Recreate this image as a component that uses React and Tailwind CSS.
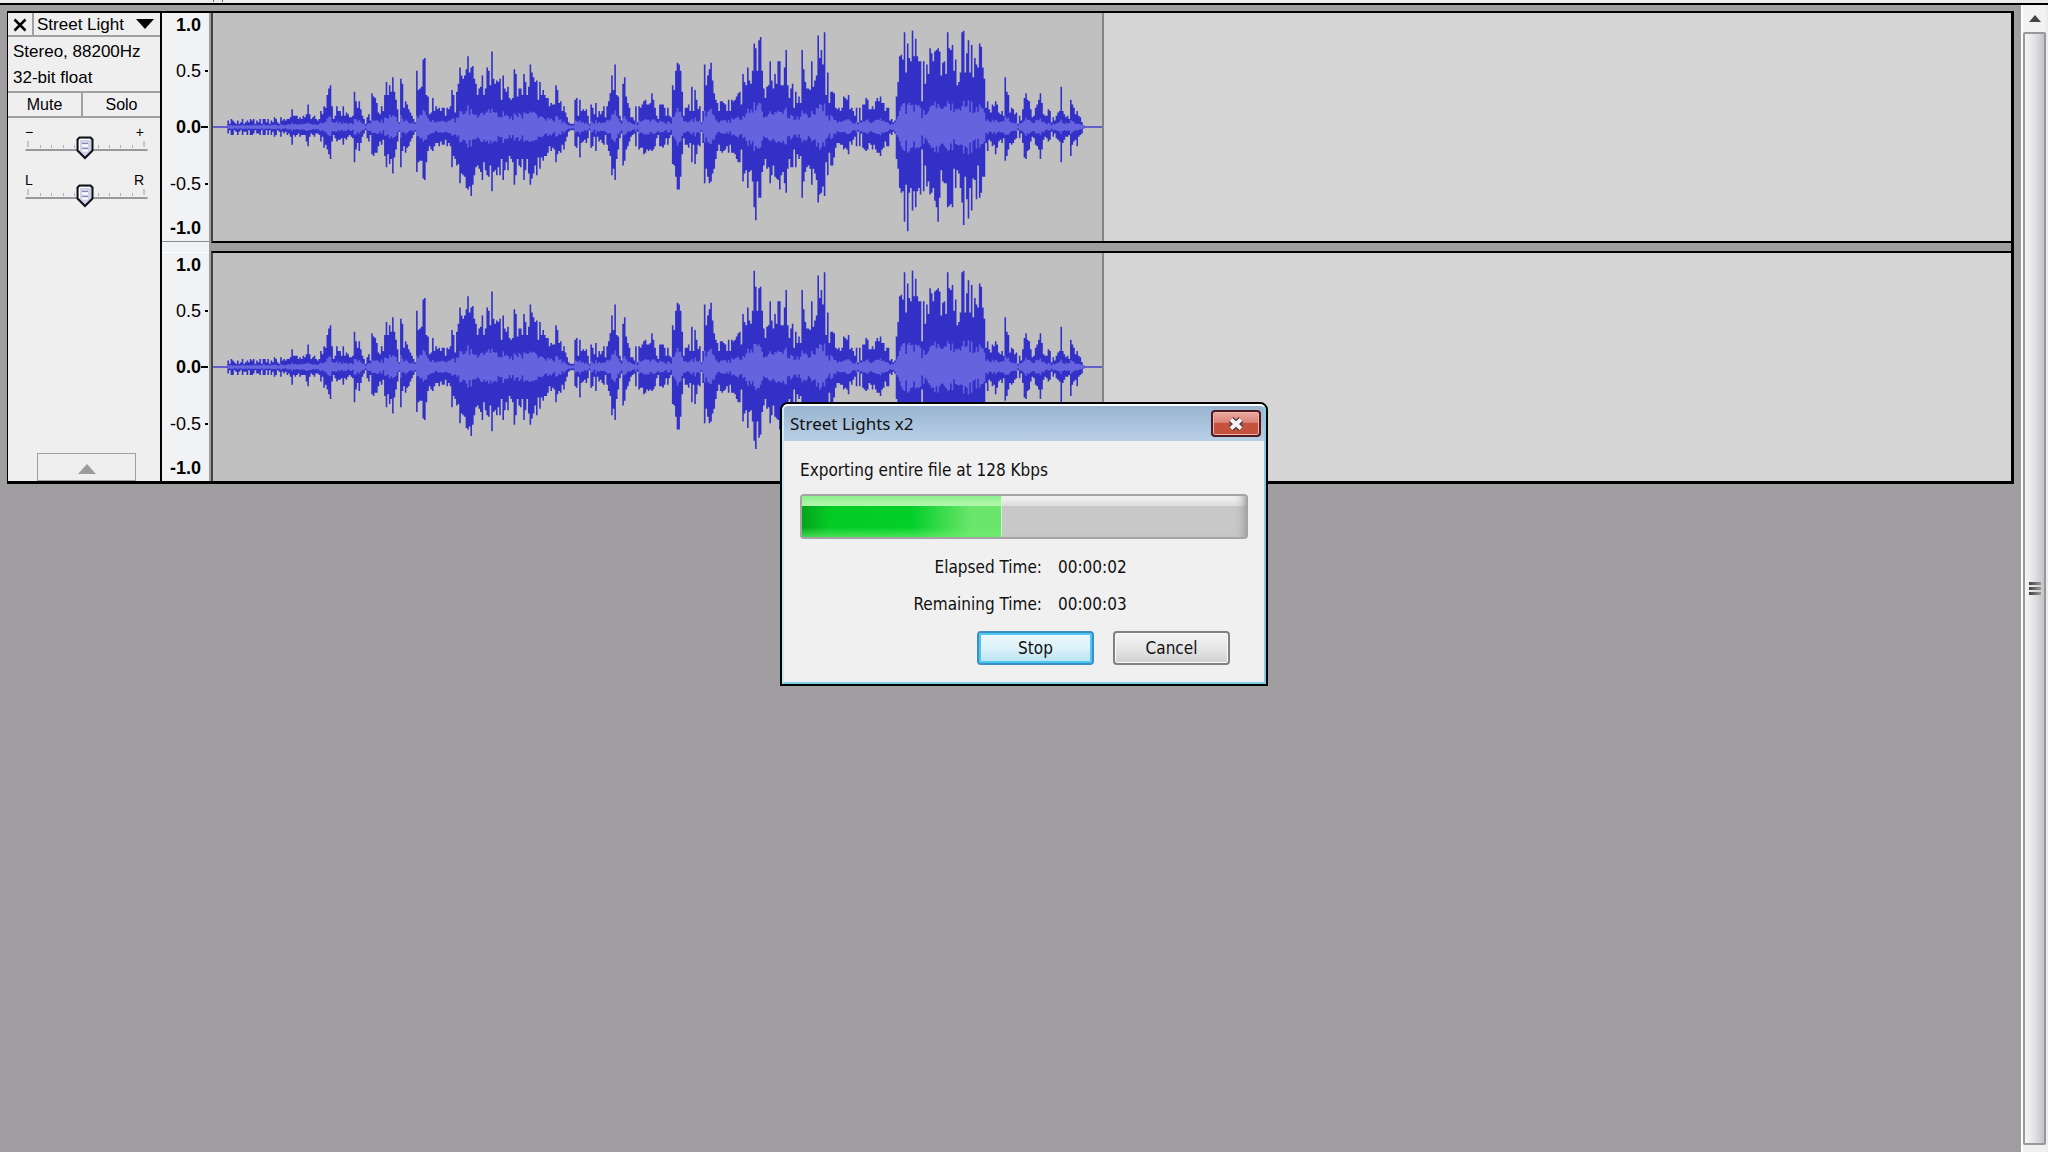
import { useState } from "react";

/* ---------- WAVEFORM DATA ---------- */
// one value per column, measured from the centre line
const SEGMENTS = [
  {
    start: 9,
    up: [4, 2, 5, 4, 3, 2, 4, 2, 3, 5, 2, 3, 4, 3, 5, 4, 5, 2, 4, 3, 5, 2, 5, 5, 3, 5, 2, 4, 3, 6, 5, 3, 2],
    down: [4, 2, 5, 5, 2, 3, 5, 3, 2, 5, 3, 3, 5, 2, 5, 5, 4, 2, 4, 4, 5, 2, 5, 5, 2, 5, 2, 5, 3, 6, 5, 2, 3],
  },
  {
    start: 42,
    up: [6, 4, 5, 4, 5, 5, 6, 11, 7, 7, 7, 5, 6, 5, 7, 6, 8, 14, 8, 5, 6, 7, 5, 4],
    down: [6, 3, 4, 3, 5, 4, 6, 11, 5, 6, 5, 4, 6, 5, 5, 5, 9, 12, 6, 4, 5, 6, 4, 4],
  },
  {
    start: 66,
    up: [5, 10, 8, 13, 12, 20, 24, 26, 13, 5, 7, 13, 10, 10, 7, 13, 7, 9, 8, 6, 6, 7],
    down: [5, 9, 6, 13, 11, 14, 17, 20, 9, 5, 7, 9, 8, 8, 7, 11, 7, 8, 6, 5, 6, 7],
  },
  {
    start: 88,
    up: [22, 16, 12, 16, 11, 7, 5, 2, 6, 8, 4, 21, 19, 18, 15, 9, 8, 13, 10, 20, 28, 20, 26, 22, 31, 22, 17, 11, 3, 30, 27, 12, 16, 14, 11, 9, 7, 5, 3],
    down: [22, 14, 10, 15, 10, 6, 4, 2, 7, 9, 5, 17, 18, 16, 16, 12, 9, 11, 8, 18, 25, 17, 23, 20, 29, 19, 14, 9, 3, 25, 15, 12, 16, 13, 12, 9, 7, 5, 3],
  },
  {
    start: 127,
    up: [35, 23, 24, 25, 42, 43, 20, 19, 8, 9, 18, 10, 13, 11, 12, 10, 12, 12, 7, 12, 11, 13, 23, 20, 9, 22, 27, 37, 32, 30, 32, 36, 44, 34, 37, 38, 30, 27, 20, 24, 25, 32, 20, 24, 37, 35, 26, 47, 30, 27, 29, 28, 30, 17, 32, 24, 22, 25, 18, 17, 18, 36, 33, 19, 24],
    down: [28, 22, 21, 21, 32, 33, 22, 15, 12, 14, 15, 12, 10, 10, 12, 9, 11, 11, 8, 12, 10, 12, 25, 18, 20, 24, 23, 35, 29, 30, 31, 38, 39, 37, 43, 36, 30, 25, 24, 26, 28, 33, 22, 27, 30, 31, 24, 40, 28, 27, 30, 25, 30, 20, 33, 27, 22, 27, 18, 20, 22, 36, 30, 20, 24],
  },
  {
    start: 192,
    up: [24, 20, 33, 28, 20, 25, 39, 34, 31, 28, 29, 17, 28, 20, 23, 20, 18, 18, 13, 15, 14, 14, 26, 23, 15, 16, 10, 13, 9, 6, 3, 2, 2, 2, 17, 18, 7, 17, 10, 11, 10, 11, 7, 2, 14, 12, 8, 15, 6, 10],
    down: [25, 20, 33, 27, 20, 29, 36, 32, 29, 24, 30, 19, 26, 19, 21, 18, 18, 16, 12, 15, 13, 14, 22, 17, 15, 16, 11, 14, 9, 6, 3, 2, 2, 2, 12, 13, 6, 19, 10, 9, 8, 10, 7, 2, 13, 12, 6, 15, 6, 9],
  },
  {
    start: 242,
    up: [8, 10, 13, 6, 13, 16, 21, 32, 23, 39, 20, 19, 7, 4, 27, 31, 19, 15, 12, 6, 6, 4, 13, 3, 13, 12, 14, 16, 17, 14, 14, 15, 21, 17, 12, 7, 5, 14, 14, 14, 12, 7, 12, 7, 6],
    down: [8, 10, 11, 5, 11, 15, 18, 30, 26, 33, 20, 14, 7, 4, 24, 21, 14, 12, 9, 6, 5, 4, 12, 3, 14, 13, 13, 17, 16, 14, 15, 14, 15, 14, 12, 7, 5, 12, 12, 13, 11, 7, 11, 7, 5],
  },
  {
    start: 287,
    up: [26, 23, 35, 40, 39, 35, 22, 7, 12, 12, 14, 10, 25, 10, 23, 17, 11, 13, 3, 10, 39, 26, 32, 36, 40, 29, 21, 17, 15, 10, 16, 16, 15, 14, 10, 17, 10, 17, 16, 17, 19, 21, 22, 14, 33, 28, 26, 37, 29, 27, 35, 52, 49, 35, 54, 56, 35, 24, 18, 25, 26, 41, 29, 24, 33, 27, 41, 41, 26, 26, 37, 48, 26],
    down: [23, 24, 31, 39, 39, 31, 17, 7, 11, 11, 13, 10, 22, 11, 23, 17, 11, 12, 3, 10, 35, 26, 31, 35, 34, 29, 26, 20, 15, 11, 15, 16, 15, 14, 12, 16, 11, 16, 16, 17, 20, 22, 22, 14, 34, 29, 27, 38, 28, 27, 34, 50, 58, 34, 44, 44, 28, 24, 20, 26, 25, 35, 30, 24, 31, 32, 33, 39, 30, 28, 35, 41, 26],
  },
  {
    start: 360,
    up: [18, 24, 27, 12, 22, 15, 19, 15, 48, 36, 28, 24, 24, 23, 41, 25, 29, 32, 57, 43, 48, 39, 59, 20, 34, 15, 22, 22, 21, 12, 11, 12, 10],
    down: [20, 25, 25, 14, 25, 17, 20, 18, 44, 34, 28, 25, 24, 26, 36, 26, 29, 33, 47, 42, 41, 37, 43, 22, 30, 16, 24, 24, 19, 13, 10, 10, 11],
  },
  {
    start: 393,
    up: [12, 19, 18, 17, 20, 11, 12, 10, 7, 12, 3, 12, 4, 14, 14, 18, 17, 11, 11, 13, 11, 16, 18, 16, 19, 15, 15, 10, 12, 12, 4, 5, 3, 4, 19, 28, 44, 45, 42, 59, 34, 52, 43, 41, 60, 44, 55, 44, 41, 41, 16, 41, 27, 39, 33, 49, 46, 41, 47, 48, 49, 47, 32, 40, 41, 33, 59, 49, 48, 51, 35, 42, 26, 28, 34, 59, 60, 34, 46, 54, 34, 51, 31, 43, 39, 37, 52, 50, 37, 30, 12, 16],
    down: [11, 14, 13, 14, 17, 9, 11, 8, 6, 12, 3, 12, 4, 13, 14, 15, 14, 10, 11, 14, 11, 14, 16, 16, 18, 14, 13, 9, 12, 12, 4, 5, 3, 4, 20, 26, 38, 41, 40, 59, 36, 65, 41, 38, 52, 40, 50, 40, 38, 42, 14, 40, 24, 37, 34, 42, 41, 38, 46, 50, 59, 44, 27, 34, 35, 35, 50, 49, 48, 50, 26, 38, 27, 29, 38, 47, 61, 31, 45, 57, 38, 52, 32, 33, 45, 24, 44, 41, 31, 31, 10, 15],
  },
  {
    start: 485,
    up: [11, 9, 14, 13, 16, 14, 9, 8, 10, 7, 31, 22, 20, 9, 12, 11, 8, 9, 2, 7, 4, 11, 18, 21, 17, 16, 11, 6, 7, 12, 14, 17, 21, 15, 8, 7, 7, 11, 10, 3, 6, 4, 7, 9, 10, 25, 10, 8, 6, 7, 5, 17, 14, 12, 8, 10, 7, 6, 3, 1],
    down: [8, 9, 12, 11, 17, 13, 9, 8, 10, 7, 21, 18, 14, 10, 11, 10, 8, 7, 2, 7, 4, 10, 19, 20, 15, 14, 9, 6, 7, 11, 12, 14, 20, 14, 8, 6, 7, 9, 8, 3, 6, 4, 7, 8, 9, 22, 10, 8, 6, 6, 5, 18, 11, 9, 8, 12, 6, 5, 4, 1],
  },
];

const LEFT = SEGMENTS.flatMap((s) =>
  s.up.map((up, i) => ({ x: s.start + i, up, down: s.down[i] ?? up }))
);

// the right channel differs from the left in a few peaks only
const RIGHT_PEAKS = {
  338: { up: 60, down: 46 },
  339: { up: 50, down: 51 },
  341: { up: 49, down: 44 },
  342: { up: 50, down: 42 },
};
const RIGHT = LEFT.map((c) => ({ ...c, ...RIGHT_PEAKS[c.x] }));

const MIDDLE = 71;

// the lighter inner band: local average of the peaks plus part of each peak
function toBand(columns) {
  return columns.map((c, i) => {
    const near = columns.slice(Math.max(0, i - 3), i + 4);
    const avg = near.reduce((sum, n) => sum + n.up + n.down, 0) / near.length / 2;
    const ripple = [0, 1, -1, 2, 0, -2, 1][(i * 5 + c.up) % 7] * avg * 0.03;
    const level = avg * 0.12 + ripple;
    return {
      x: c.x,
      up: Math.max(1, Math.min(level + c.up * 0.16, c.up - 1)),
      down: Math.max(1, Math.min(level + c.down * 0.16, c.down - 1)),
    };
  });
}

function toPath(columns) {
  return columns
    .map((c) => `M${c.x} ${MIDDLE - c.up}h1v${c.up + c.down}h-1z`)
    .join("");
}

const CHANNELS = [
  { label: "Left channel", peaks: toPath(LEFT), band: toPath(toBand(LEFT)) },
  { label: "Right channel", peaks: toPath(RIGHT), band: toPath(toBand(RIGHT)) },
];

/* ---------- WAVEFORM ---------- */
function Channel({ channel }) {
  return (
    <div className="flex h-[228px] bg-[#d6d5d6]">
      <div className="w-[891px] border-r-2 border-[#858585] bg-[#c0c0c0]">
        <svg
          role="img"
          aria-label={channel.label}
          viewBox="0 0 556 142"
          preserveAspectRatio="none"
          className="block h-full w-full"
        >
          <path d={`M0 ${MIDDLE}h556`} stroke="#4340c8" strokeWidth="1" />
          <path d={channel.peaks} fill="#3330c8" />
          <path d={channel.band} fill="#6563de" />
        </svg>
      </div>
    </div>
  );
}

/* ---------- VERTICAL RULER ---------- */
function Ruler() {
  return (
    <div className="grid h-[228px] grid-rows-[24px_68px_44px_70px_18px] items-center text-right text-lg leading-5">
      <div className="pr-2 font-bold">1.0</div>
      <div className="flex items-center justify-end gap-1 pr-px">
        0.5
        <span className="h-[2px] w-[3px] bg-black" />
      </div>
      <div className="flex items-center justify-end pr-px font-bold">
        0.0
        <span className="h-[2px] w-[7px] bg-black" />
      </div>
      <div className="flex items-center justify-end gap-1 pr-px">
        -0.5
        <span className="h-[2px] w-[3px] bg-black" />
      </div>
      <div className="pr-2 font-bold">-1.0</div>
    </div>
  );
}

/* ---------- TRACK SLIDER ---------- */
function TrackSlider({ label, low, high }) {
  const [value, setValue] = useState(49);

  return (
    <div>
      <div className="flex h-[10px] justify-between pr-1 text-sm leading-3">
        <span>{low}</span>
        <span>{high}</span>
      </div>
      <div className="relative h-6">
        <svg viewBox="0 0 122 24" className="block h-6 w-full">
          <path
            d="M15 9v3M26 9v3M38 9v3M49 9v3M73 9v3M84 9v3M95 9v3M107 9v3"
            stroke="#b0b0b0"
            strokeWidth="1"
          />
          <path d="M2.500 5v6M118.500 5v6" stroke="#9a9a9a" />
          <path d="M0 14h122" stroke="#9a9a9a" strokeWidth="2" />
        </svg>
        <svg
          viewBox="0 0 18 24"
          className="absolute top-0 h-6 w-[18px] -translate-x-1/2"
          style={{ left: `${value}%` }}
        >
          <path
            d="M3.500 1.500h11l2 2v11l-7.500 7.500l-7.500-7.500v-11z"
            fill="#d0d0e6"
            stroke="#101018"
            strokeWidth="2"
          />
          <path d="M3.500 14V3.500h10" fill="none" stroke="#fff" />
          <path d="M6 9.500h6M6 14.500h6" stroke="#fff" strokeWidth="2" />
          <path d="M6 7.500h6M6 12.500h6" stroke="#8484a8" />
        </svg>
        <input
          type="range"
          min="0"
          max="100"
          aria-label={label}
          value={value}
          onChange={(e) => setValue(Number(e.target.value))}
          className="absolute inset-0 w-full opacity-0"
        />
      </div>
    </div>
  );
}

/* ---------- TRACK PANEL ---------- */
function TrackPanel() {
  return (
    <div className="flex w-[152px] shrink-0 flex-col bg-[#f0eff0] text-[17px]">
      <div className="flex h-6 border-b-2 border-[#a0a0a0]">
        <button
          aria-label="Close track"
          className="flex w-[26px] items-center justify-center border-r-2 border-[#a0a0a0] pt-[2px]"
        >
          <svg viewBox="0 0 14 14" className="h-[14px] w-[14px]">
            <path d="M1.500 1.500l11 11M12.500 1.500l-11 11" stroke="#000" strokeWidth="2.500" />
          </svg>
        </button>
        <button className="flex flex-1 items-center justify-between pt-[2px] pr-[6px] pl-[3px] leading-5">
          Street Light
          <svg viewBox="0 0 18 10" className="mb-[2px] h-[10px] w-[18px]">
            <path d="M0 0h18l-9 10z" />
          </svg>
        </button>
      </div>

      <div className="h-[54px] px-[5px] pt-[2px] leading-[26px]">
        <div>Stereo, 88200Hz</div>
        <div>32-bit float</div>
      </div>

      <div className="flex h-[27px] border-y-2 border-[#a0a0a0] text-base leading-5">
        <button className="w-[75px] border-r-2 border-[#a0a0a0]">Mute</button>
        <button className="flex-1">Solo</button>
      </div>

      <div className="space-y-[14px] pt-2 pr-3 pl-[17px]">
        <TrackSlider label="Gain" low="−" high="+" />
        <TrackSlider label="Pan" low="L" high="R" />
      </div>

      <button
        aria-label="Collapse track"
        className="mt-auto ml-[29px] flex h-7 w-[99px] items-center justify-center border border-[#a0a0a0] pt-1"
      >
        <svg viewBox="0 0 18 10" className="h-[10px] w-[18px]">
          <path d="M9 0l9 10H0z" fill="#9c9c9c" />
        </svg>
      </button>
    </div>
  );
}

/* ---------- SCROLL BAR ---------- */
function ScrollBar() {
  return (
    <div className="flex w-[27px] shrink-0 flex-col border-l-2 border-white bg-[#ececee] pr-[2px]">
      <button aria-label="Scroll up" className="flex h-[27px] items-center justify-center bg-[#f2f2f2]">
        <svg viewBox="0 0 12 7" className="h-[7px] w-3">
          <path d="M6 0l6 7H0z" fill="#444" />
        </svg>
      </button>
      <div className="flex flex-1 flex-col items-center justify-center gap-[2px] rounded-xs border-2 border-[#98989a] bg-linear-to-r from-[#f6f6f6] via-[#e2e2e4] to-[#c4c4c8]">
        <span className="h-[3px] w-3 bg-linear-to-r from-[#444] to-[#999]" />
        <span className="h-[3px] w-3 bg-linear-to-r from-[#444] to-[#999]" />
        <span className="h-[3px] w-3 bg-linear-to-r from-[#444] to-[#999]" />
      </div>
      <div className="h-[7px] bg-[#f0f0f0]" />
    </div>
  );
}

/* ---------- EXPORT DIALOG ---------- */
function ExportDialog() {
  const progress = 45;

  return (
    <div
      role="dialog"
      aria-labelledby="dialog-title"
      className="absolute top-[402px] left-1/2 w-[488px] -translate-x-1/2 rounded-t-lg border-2 border-black bg-[#f0f0f0] font-['DejaVu_Sans_Condensed','DejaVu_Sans',sans-serif] text-[17px] leading-6 text-[#101010]"
    >
      <div className="rounded-t-md border-2 border-[#7fd0e4] border-t-white border-l-[#c4ecf6]">
        <div className="flex h-[35px] items-center justify-between rounded-t-sm bg-linear-to-b from-[#9ab4d0] to-[#b8cfe6] pr-[3px] pl-[6px]">
          <h1 id="dialog-title" className="font-['Noto_Sans','Open_Sans',sans-serif]">
            Street Lights x2
          </h1>
          <button
            aria-label="Close"
            className="flex h-[27px] w-[50px] items-center justify-center rounded-sm border-2 border-[#4e1a20] bg-linear-to-b from-[#eaaaa2] from-0% via-[#dc8478] via-45% to-[#c4523c] to-50% shadow-[inset_0_0_0_1px_#f0b8b0]"
          >
            <svg viewBox="0 0 20 16" className="h-4 w-5">
              <path d="M5 3.500l10 9M15 3.500l-10 9" stroke="#50383c" strokeWidth="6.500" />
              <path d="M5 3.500l10 9M15 3.500l-10 9" stroke="#f4f4f4" strokeWidth="4" />
            </svg>
          </button>
        </div>

        <div className="px-4 pt-[17px] pb-[17px]">
          <p>Exporting entire file at 128 Kbps</p>

          <div
            role="progressbar"
            aria-label="Export progress"
            aria-valuenow={progress}
            className="mt-3 h-[45px] rounded-sm border-2 border-[#a4a4a4] bg-linear-to-b from-[#f6f6f6] from-0% via-[#dcdcdc] via-24% to-[#c9c8c9] to-25% shadow-[inset_-8px_0_8px_-6px_#999]"
          >
            <div
              className="h-full border-r border-[#c8ffc4] bg-[linear-gradient(90deg,#04a41c_0%,#02cb26_14%,#02d028_55%,#6ae66c_85%,#6ae66c_100%)]"
              style={{ width: `${progress}%` }}
            >
              <div className="flex h-full flex-col justify-between">
                <div className="h-[10px] bg-linear-to-b from-[#8ef08e] to-[#b4f6ae]" />
                <div className="h-[10px] bg-linear-to-b from-transparent to-[#70f070]/60" />
              </div>
            </div>
          </div>

          <dl className="mt-4 grid grid-cols-[242px_1fr] gap-x-4 gap-y-[13px]">
            <dt className="text-right">Elapsed Time:</dt>
            <dd>00:00:02</dd>
            <dt className="text-right">Remaining Time:</dt>
            <dd>00:00:03</dd>
          </dl>

          <div className="mt-[15px] flex justify-end gap-[19px] pr-[18px]">
            <button className="h-[34px] w-[117px] rounded-sm border-2 border-[#3c8fc1] bg-linear-to-b from-[#eef9fd] from-0% via-[#dcf2fa] via-50% to-[#b8e2f2] to-100% shadow-[inset_0_0_0_2px_#4cc8f4]">
              Stop
            </button>
            <button className="h-[34px] w-[117px] rounded-sm border-2 border-[#808080] bg-linear-to-b from-[#f4f4f4] from-0% via-[#e6e6e6] via-50% to-[#d0d0d0] to-100% shadow-[inset_0_0_0_1px_#fafafa]">
              Cancel
            </button>
          </div>
        </div>
      </div>
    </div>
  );
}

export default function App() {
  return (
    <div className="relative flex h-screen flex-col overflow-hidden bg-[#a09ea0] font-['Liberation_Sans',Arial,sans-serif] text-black">
      <div className="flex h-[5px] shrink-0 gap-2 border-b-2 border-black bg-[#ececec] pl-[213px]">
        <span className="h-[2px] w-px bg-[#666]" />
        <span className="h-[2px] w-px bg-[#666]" />
      </div>

      <div className="flex min-h-0 flex-1">
        <main className="min-w-0 flex-1 px-[7px] pt-[6px]">
          <section
            aria-label="Street Lights track"
            className="flex border-t-2 border-r-[3px] border-b-[3px] border-l border-black"
          >
            <TrackPanel />

            {/* RULERS */}
            <div className="flex w-[49px] shrink-0 flex-col justify-between border-l-2 border-black bg-[#f0f2f4]">
              <Ruler />
              <div className="flex-1 border-t border-b border-t-[#8a8a8a] border-b-white" />
              <Ruler />
            </div>

            {/* CHANNELS */}
            <div className="min-w-0 flex-1 bg-[#a09ea0] pl-[2px]">
              {CHANNELS.map((channel, i) => (
                <div
                  key={channel.label}
                  className={
                    i === 0
                      ? "mb-2 border-b-2 border-l-2 border-black border-l-[#444]"
                      : "border-t-2 border-l-2 border-black border-l-[#444]"
                  }
                >
                  <Channel channel={channel} />
                </div>
              ))}
            </div>
          </section>
        </main>

        <ScrollBar />
      </div>

      <ExportDialog />
    </div>
  );
}
